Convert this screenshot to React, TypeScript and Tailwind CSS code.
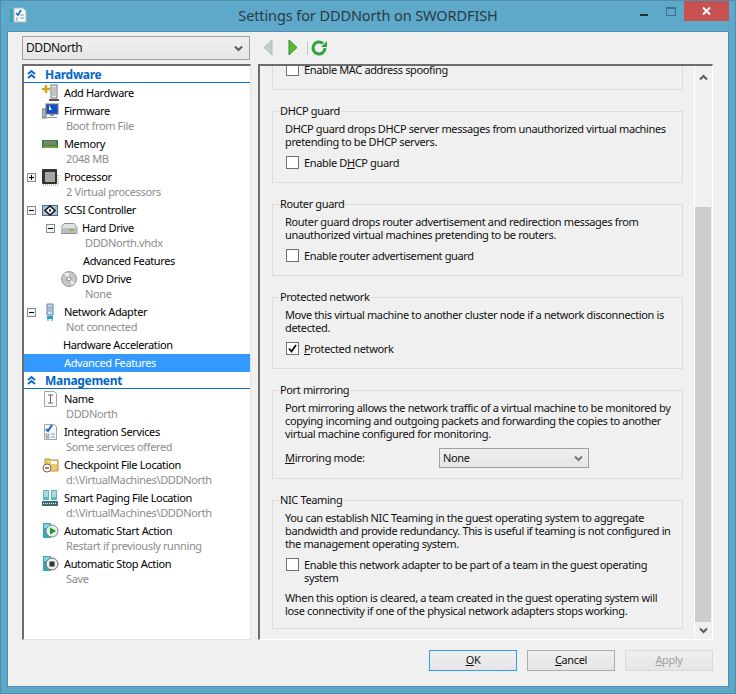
import type { ReactNode } from "react"

const FONT = "font-['Noto_Sans','Open_Sans',sans-serif]"

function Expander({ open }: { open: boolean }) {
  return (
    <span className="relative block h-[9px] w-[9px] border border-[#7f8f8f] bg-[#f4f4f4]">
      <span className="absolute left-[1px] top-[3px] h-[1px] w-[5px] bg-black" />
      {open ? null : <span className="absolute left-[3px] top-[1px] h-[5px] w-[1px] bg-black" />}
    </span>
  )
}

function Svg({ children, w = 17, h = 17 }: { children: ReactNode; w?: number; h?: number }) {
  return (
    <svg width={w} height={h} viewBox={`0 0 ${w} ${h}`} className="block shrink-0">
      {children}
    </svg>
  )
}

const icons: Record<string, ReactNode> = {
  add: (
    <Svg h={18}>
      <rect x="9" y="1" width="6" height="13" fill="#e8eef0" stroke="#777" />
      <path d="M11 3v9M13 3v9" stroke="#999" />
      <rect x="7" y="15" width="10" height="2" fill="#555" />
      <path d="M4 1v8M0 5h8" stroke="#c9a818" strokeWidth="2.4" />
    </Svg>
  ),
  firmware: (
    <Svg>
      <rect x="4" y="1" width="12" height="10" fill="#1350c8" stroke="#777" />
      <path d="M7 2l3 5H7z" fill="#dff" />
      <rect x="0" y="6" width="4" height="9" fill="#a9b4b6" stroke="#777" />
      <path d="M8 11h4v2H8zM5 14h10v1H5z" fill="#8c9699" />
    </Svg>
  ),
  memory: (
    <Svg h={12}>
      <rect x="0" y="2" width="16" height="8" fill="#2e8b3c" />
      <rect x="2" y="3" width="12" height="4" fill="#d9d3a8" />
      <path d="M3 3v4M5 3v4M7 3v4M9 3v4M11 3v4M13 3v4" stroke="#333" />
      <path d="M1 9h14" stroke="#c8b040" />
    </Svg>
  ),
  cpu: (
    <Svg>
      <rect x="0" y="0" width="15" height="15" rx="1" fill="#333" />
      <rect x="3" y="3" width="10" height="10" fill="#a6a6a6" />
      <path d="M1 16h15M16 6v10" stroke="#b8862c" strokeDasharray="1 1" />
    </Svg>
  ),
  scsi: (
    <Svg h={13}>
      <rect x="0.5" y="1.5" width="15" height="10" fill="#a9c0d8" stroke="#4f6a8a" />
      <path d="M8 2l5 4.500-5 4.500-5-4.500z" fill="#fff" stroke="#111" strokeWidth="1.500" />
      <rect x="7" y="5.500" width="2" height="2" fill="#111" />
    </Svg>
  ),
  hdd: (
    <Svg h={13}>
      <path d="M3 1.500h10l3 4v6H0v-6z" fill="#dfe3e4" stroke="#8b9294" />
      <rect x="1" y="6" width="14" height="5" fill="#b8bdbf" />
      <rect x="9" y="7" width="4" height="2" fill="#7cc04a" />
    </Svg>
  ),
  dvd: (
    <Svg w={16} h={16}>
      <circle cx="8" cy="8" r="7.500" fill="#c4c6c8" stroke="#999" />
      <path d="M8 8L3 2h5zM8 8l6 4-3 2z" fill="#ecefef" />
      <circle cx="8" cy="8" r="2" fill="#fff" stroke="#888" />
    </Svg>
  ),
  nic: (
    <Svg w={13} h={18}>
      <path d="M5 1h6v11H5z" fill="#cfe0ea" stroke="#5f7f98" />
      <path d="M7 3v6M9 3v6" stroke="#7f9db2" />
      <path d="M5 13h6v3H5z" fill="#27a3d8" />
      <path d="M6 16v2M10 16v2" stroke="#27a3d8" />
    </Svg>
  ),
  name: (
    <Svg h={18}>
      <path d="M2.500 1.500h10l2 2v13h-12z" fill="#fbfbfb" stroke="#a5a5a5" />
      <path d="M6 5h5M8.500 5v8M6 13h5" stroke="#666" fill="none" />
    </Svg>
  ),
  services: (
    <Svg h={18}>
      <path d="M2.500 1.500h10l2 2v13h-12z" fill="#f4f6f8" stroke="#a5a5a5" />
      <path d="M4 6l2 2 4-6" stroke="#1569c7" strokeWidth="2" fill="none" />
      <path d="M4 11h3v2H4zM4 14h3v1H4zM9 11h4M9 14h4" stroke="#8a9aa5" fill="none" />
    </Svg>
  ),
  checkpoint: (
    <Svg h={18}>
      <path d="M3 3h5l1 1h7v11H3z" fill="#eccb6d" stroke="#b8963c" />
      <path d="M9 5h6v3H9z" fill="#fff" />
      <circle cx="5" cy="12" r="4" fill="#fff" stroke="#666" />
      <path d="M3 12h4" stroke="#c8301f" strokeWidth="1.500" />
    </Svg>
  ),
  paging: (
    <Svg h={18}>
      <path d="M1 1h6v10H1zM9 1h6v10H9z" fill="#5eb6bd" />
      <path d="M2 3h4M2 5h4M2 7h4M10 3h4M10 5h4M10 7h4" stroke="#fff" />
      <rect x="0" y="12" width="16" height="5" fill="#3f6d74" />
      <path d="M1 14.500h14" stroke="#e6eeee" strokeDasharray="1 1" />
    </Svg>
  ),
  start: (
    <Svg h={18}>
      <path d="M1 1h8v15H1z" fill="#3ba7b5" />
      <path d="M2 3h6M2 5h6" stroke="#dff" />
      <circle cx="10" cy="9" r="6" fill="#e8ecec" stroke="#7a8a8a" />
      <path d="M8 5.500l6 3.500-6 3.500z" fill="#1f9a1f" />
    </Svg>
  ),
  stop: (
    <Svg h={18}>
      <path d="M1 1h8v15H1z" fill="#3ba7b5" />
      <path d="M2 3h6M2 5h6" stroke="#dff" />
      <circle cx="10" cy="9" r="6" fill="#e8ecec" stroke="#6a6a6a" />
      <rect x="7.500" y="6.500" width="5" height="5" fill="#333" />
    </Svg>
  ),
}

type Item = {
  label: string
  sub?: string
  icon?: string
  expander?: boolean | "plus"
  nested?: boolean
  textOffset?: number
  selected?: boolean
}

function TreeSection({ title }: { title: string }) {
  return (
    <div className="mb-[1px] flex h-[17px] items-center border-b border-[#0a6fd0] pl-[3px]">
      <svg width="9" height="9" viewBox="0 0 9 9" className="shrink-0">
        <path d="M1 4l3.500-3L8 4M1 8l3.500-3L8 8" fill="none" stroke="#0a64c8" strokeWidth="1.800" />
      </svg>
      <span className="ml-[9px] pt-[1px] text-[12px] font-bold tracking-[-0.3px] text-[#0066cc]">{title}</span>
    </div>
  )
}

function TreeItem({ item }: { item: Item }) {
  const nested = item.nested
  return (
    <div>
      <div
        className={`flex h-[18px] items-center ${nested ? "pl-[22px]" : "pl-[3px]"} ${
          item.selected ? "bg-[#3399ff] text-white" : "text-black"
        }`}
      >
        <span className="flex w-[15px] shrink-0 items-center">
          {item.expander ? <Expander open={item.expander !== "plus"} /> : null}
        </span>
        <span className={`flex shrink-0 items-center ${nested ? "w-[21px]" : "w-[22px]"}`}>
          {item.icon ? icons[item.icon] : null}
        </span>
        <span
          className="whitespace-nowrap"
          style={item.textOffset ? { marginLeft: item.textOffset } : undefined}
        >
          {item.label}
        </span>
      </div>
      {item.sub ? (
        <div className={`h-[15px] whitespace-nowrap leading-[11px] text-[#8c8c8c] ${nested ? "pl-[61px]" : "pl-[42px]"}`}>
          {item.sub}
        </div>
      ) : null}
    </div>
  )
}

const hardware: Item[] = [
  { label: "Add Hardware", icon: "add" },
  { label: "Firmware", sub: "Boot from File", icon: "firmware" },
  { label: "Memory", sub: "2048 MB", icon: "memory" },
  { label: "Processor", sub: "2 Virtual processors", icon: "cpu", expander: "plus" },
  { label: "SCSI Controller", icon: "scsi", expander: true },
  { label: "Hard Drive", sub: "DDDNorth.vhdx", icon: "hdd", expander: true, nested: true },
  { label: "Advanced Features", nested: true, textOffset: 1 },
  { label: "DVD Drive", sub: "None", icon: "dvd", nested: true },
  { label: "Network Adapter", sub: "Not connected", icon: "nic", expander: true },
  { label: "Hardware Acceleration", textOffset: -1 },
  { label: "Advanced Features", selected: true },
]

const management: Item[] = [
  { label: "Name", sub: "DDDNorth", icon: "name" },
  { label: "Integration Services", sub: "Some services offered", icon: "services" },
  { label: "Checkpoint File Location", sub: "d:\\VirtualMachines\\DDDNorth", icon: "checkpoint" },
  { label: "Smart Paging File Location", sub: "d:\\VirtualMachines\\DDDNorth", icon: "paging" },
  { label: "Automatic Start Action", sub: "Restart if previously running", icon: "start" },
  { label: "Automatic Stop Action", sub: "Save", icon: "stop" },
]

function Chevron({ color = "#5c5c5c" }: { color?: string }) {
  return (
    <svg width="9" height="7" viewBox="0 0 9 7" className="shrink-0">
      <path d="M1 1.500l3.500 3.500L8 1.500" fill="none" stroke={color} strokeWidth="2" />
    </svg>
  )
}

function Check({ checked, children }: { checked?: boolean; children: ReactNode }) {
  return (
    <div className="ml-[1px] flex items-start">
      <span className="flex h-[13px] w-[13px] shrink-0 items-center justify-center border border-[#707070] bg-white">
        {checked ? (
          <svg width="9" height="9" viewBox="0 0 9 9">
            <path d="M1 4.500l2.500 3L8 1" fill="none" stroke="#111" strokeWidth="1.800" />
          </svg>
        ) : null}
      </span>
      <span className="ml-[5px] leading-[13px]">{children}</span>
    </div>
  )
}

function Group({
  title,
  className,
  children,
}: {
  title?: string
  className: string
  children: ReactNode
}) {
  return (
    <fieldset className={`ml-[12px] mr-[11px] border border-[#dcdcdc] pl-[12px] ${className}`}>
      {title ? <legend className="-ml-[6px] px-[1px] pb-[2px] leading-[13px]">{title}</legend> : null}
      {children}
    </fieldset>
  )
}

function Button({
  children,
  className,
}: {
  children: ReactNode
  className: string
}) {
  return (
    <div className={`flex h-[21px] w-[88px] items-center justify-center bg-gradient-to-b from-[#f0f0f0] to-[#e5e5e5] ${className}`}>
      {children}
    </div>
  )
}

export default function App() {
  return (
    <div className={`flex h-[694px] w-[736px] flex-col overflow-hidden border border-[#4f8fad] bg-[#5ea8c9] text-[11px] tracking-[-0.36px] text-[#111] ${FONT}`}>
      {/* title bar */}
      <div className="flex h-[30px] shrink-0 items-start">
        <div className="w-[136px] pl-[9px] pt-[6px]">
          <svg width="17" height="16" viewBox="0 0 17 16" className="block">
            <path d="M4 1h9l3 3v11H4z" fill="#f4f8fa" stroke="#a8bcc6" />
            <path d="M0 2h3v13H0z" fill="#3aa5b5" />
            <path d="M6 6l2 2 3-5" fill="none" stroke="#1569c7" strokeWidth="1.600" />
            <path d="M6 11h2M10 8h4M10 11h4M6 13h2" stroke="#8a9aa5" />
          </svg>
        </div>
        <div className="flex-1 whitespace-nowrap pt-[4px] text-center text-[14.5px] leading-[20px] tracking-[-0.1px] text-[#2a3b45]">
          Settings for DDDNorth on SWORDFISH
        </div>
        <div className="flex w-[136px] items-start justify-end pr-[6px]">
          <div className="mr-[8px] mt-[6px] flex items-center gap-[18px]">
            <span className="mt-[6px] h-[2px] w-[8px] bg-[#20303a]" />
            <span className="h-[9px] w-[10px] border border-t-2 border-[#3f6f88]" />
          </div>
          <div className="flex h-[20px] w-[45px] items-center justify-center bg-[#c75050]">
            <svg width="9" height="8" viewBox="0 0 9 8">
              <path d="M1 0.500l7 7M8 0.500l-7 7" stroke="#fff" strokeWidth="2" />
            </svg>
          </div>
        </div>
      </div>

      {/* client area */}
      <div className="mx-[6px] mb-[6px] flex min-h-0 flex-1 flex-col border border-[#4f8fad] bg-[#f0f0f0] pl-[14px] pr-[15px] pt-[4px]">
        <div className="flex h-[24px] shrink-0 items-center">
          <div className="flex h-[24px] w-[228px] items-center justify-between border border-[#a0a0a0] bg-gradient-to-b from-[#f0f0f0] to-[#e5e5e5] pl-[3px] pr-[6px] text-[12px] tracking-[-0.4px]">
            <span>DDDNorth</span>
            <Chevron />
          </div>
          <svg width="66" height="18" viewBox="0 0 66 18" className="ml-[13px] shrink-0">
            <path d="M9 1L1 8.500 9 16z" fill="#c6cfc6" stroke="#b0b8b0" />
            <path d="M26 1l8 7.500-8 7.500z" fill="#5cb82c" stroke="#2f8f2f" />
            <path d="M44.500 2v14" stroke="#c8c8c8" />
            <path d="M62 9a6 6 0 1 1-2-4.500" fill="none" stroke="#2ea43c" strokeWidth="3" />
            <path d="M64 2v6h-6z" fill="#2ea43c" />
          </svg>
        </div>

        <div className="mt-[4px] flex h-[576px] shrink-0 gap-[7px]">
          {/* hardware tree */}
          <div className="w-[229px] shrink-0 border-b border-l-2 border-r border-t-2 border-b-[#e3e3e3] border-l-[#6d6d6d] border-r-[#e3e3e3] border-t-[#6d6d6d] bg-white">
            <TreeSection title="Hardware" />
            {hardware.map((item, i) => (
              <TreeItem key={i} item={item} />
            ))}
            <TreeSection title="Management" />
            {management.map((item, i) => (
              <TreeItem key={i} item={item} />
            ))}
          </div>

          {/* settings panel */}
          <div className="flex min-w-0 flex-1 border-b border-l-2 border-r border-t-2 border-b-white border-l-[#6d6d6d] border-r-white border-t-[#6d6d6d]">
            <div className="min-w-0 flex-1 overflow-hidden">
              <Group className="-mt-[59px] h-[83px] pt-[55px]">
                <Check>Enable MAC address spoofing</Check>
              </Group>
              <Group title="DHCP guard" className="mt-[14px] h-[79px]">
                <p className="mt-[3px] leading-[13px]">
                  DHCP guard drops DHCP server messages from unauthorized virtual machines
                  <br />
                  pretending to be DHCP servers.
                </p>
                <div className="mt-[8px]">
                  <Check>Enable D<u>H</u>CP guard</Check>
                </div>
              </Group>
              <Group title="Router guard" className="mt-[14px] h-[79px]">
                <p className="mt-[3px] leading-[13px]">
                  Router guard drops router advertisement and redirection messages from
                  <br />
                  unauthorized virtual machines pretending to be routers.
                </p>
                <div className="mt-[8px]">
                  <Check>Enable <u>r</u>outer advertisement guard</Check>
                </div>
              </Group>
              <Group title="Protected network" className="mt-[14px] h-[79px]">
                <p className="mt-[3px] leading-[13px]">
                  Move this virtual machine to another cluster node if a network disconnection is
                  <br />
                  detected.
                </p>
                <div className="mt-[8px]">
                  <Check checked><u>P</u>rotected network</Check>
                </div>
              </Group>
              <Group title="Port mirroring" className="mt-[14px] h-[96px]">
                <p className="mt-[3px] leading-[13px]">
                  Port mirroring allows the network traffic of a virtual machine to be monitored by
                  <br />
                  copying incoming and outgoing packets and forwarding the copies to another
                  <br />
                  virtual machine configured for monitoring.
                </p>
                <div className="mt-[8px] flex items-center">
                  <span className="w-[154px]"><u>M</u>irroring mode:</span>
                  <div className="flex h-[20px] w-[150px] items-center justify-between border border-[#a0a0a0] bg-gradient-to-b from-[#f0f0f0] to-[#e5e5e5] pl-[3px] pr-[5px]">
                    <span>None</span>
                    <Chevron color="#777" />
                  </div>
                </div>
              </Group>
              <Group title="NIC Teaming" className="mt-[14px] h-[136px]">
                <p className="mt-[3px] leading-[13px]">
                  You can establish NIC Teaming in the guest operating system to aggregate
                  <br />
                  bandwidth and provide redundancy. This is useful if teaming is not configured in
                  <br />
                  the management operating system.
                </p>
                <div className="mt-[8px]">
                  <Check>
                    Enable this network adapter to be part of a team in the guest operating
                    <br />
                    system
                  </Check>
                </div>
                <p className="mt-[7px] leading-[13px]">
                  When this option is cleared, a team created in the guest operating system will
                  <br />
                  lose connectivity if one of the physical network adapters stops working.
                </p>
              </Group>
            </div>

            {/* scrollbar */}
            <div className="flex w-[18px] shrink-0 flex-col border-l border-white">
              <div className="flex h-[17px] shrink-0 items-center justify-center pt-[6px]">
                <span className="rotate-180"><Chevron /></span>
              </div>
              <div className="flex-1 pr-[1px] pt-[124px]">
                <div className="h-[415px] bg-[#cdcdcd]" />
              </div>
              <div className="flex h-[17px] shrink-0 items-center justify-center">
                <Chevron />
              </div>
            </div>
          </div>
        </div>

        {/* footer buttons */}
        <div className="mt-[10px] flex justify-end gap-[10px]">
          <Button className="border border-[#3399ff]"><span><u>O</u>K</span></Button>
          <Button className="border border-[#adadad]"><span><u>C</u>ancel</span></Button>
          <Button className="border border-[#d9d9d9] text-[#a0a0a0]"><span><u>A</u>pply</span></Button>
        </div>
      </div>
    </div>
  )
}
